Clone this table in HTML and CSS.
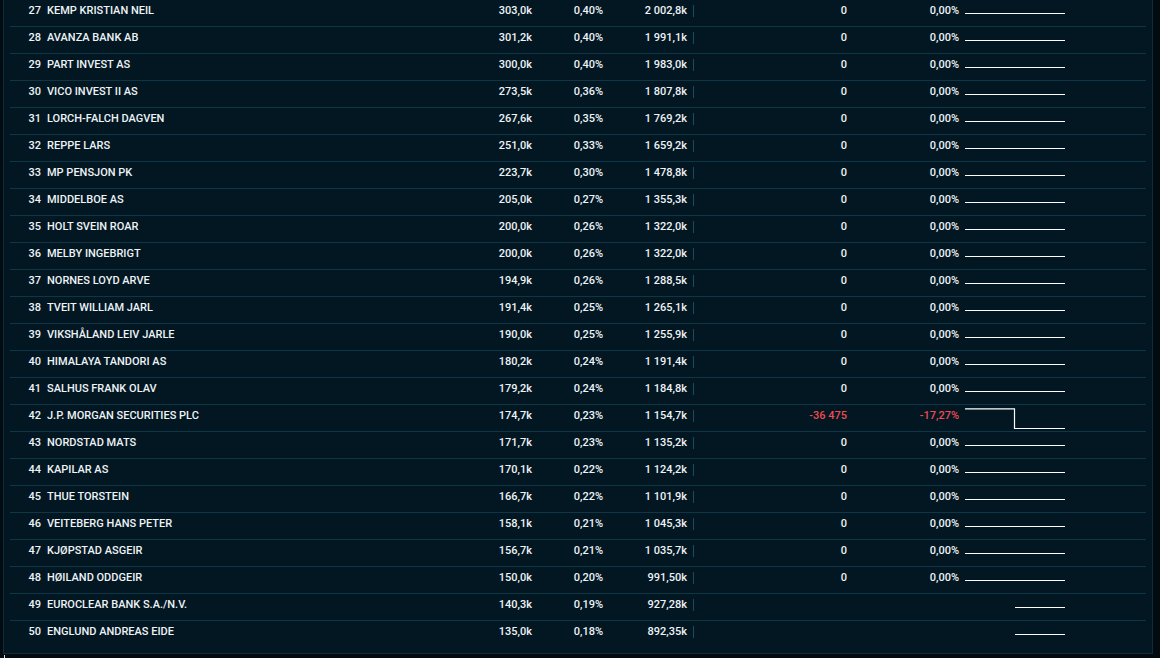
FILE: index.html
```html
<!DOCTYPE html>
<html lang="no">
<head>
<meta charset="utf-8">
<title>Aksjonærliste</title>
<link rel="stylesheet" href="styles.css">
</head>
<body>
<div class="panel">
  <div class="row"><span class="rank">27</span><span class="name">KEMP KRISTIAN NEIL</span><span class="c-val">303,0k</span><span class="c-pct">0,40%</span><span class="c-tot">2 002,8k</span><i class="div"></i><span class="c-chg">0</span><span class="c-chp">0,00%</span><svg class="spark" viewBox="0 0 100 22"><path d="M0 10.5H100"/></svg></div>
  <div class="row"><span class="rank">28</span><span class="name">AVANZA BANK AB</span><span class="c-val">301,2k</span><span class="c-pct">0,40%</span><span class="c-tot">1 991,1k</span><i class="div"></i><span class="c-chg">0</span><span class="c-chp">0,00%</span><svg class="spark" viewBox="0 0 100 22"><path d="M0 10.5H100"/></svg></div>
  <div class="row"><span class="rank">29</span><span class="name">PART INVEST AS</span><span class="c-val">300,0k</span><span class="c-pct">0,40%</span><span class="c-tot">1 983,0k</span><i class="div"></i><span class="c-chg">0</span><span class="c-chp">0,00%</span><svg class="spark" viewBox="0 0 100 22"><path d="M0 10.5H100"/></svg></div>
  <div class="row"><span class="rank">30</span><span class="name">VICO INVEST II AS</span><span class="c-val">273,5k</span><span class="c-pct">0,36%</span><span class="c-tot">1 807,8k</span><i class="div"></i><span class="c-chg">0</span><span class="c-chp">0,00%</span><svg class="spark" viewBox="0 0 100 22"><path d="M0 10.5H100"/></svg></div>
  <div class="row"><span class="rank">31</span><span class="name">LORCH-FALCH DAGVEN</span><span class="c-val">267,6k</span><span class="c-pct">0,35%</span><span class="c-tot">1 769,2k</span><i class="div"></i><span class="c-chg">0</span><span class="c-chp">0,00%</span><svg class="spark" viewBox="0 0 100 22"><path d="M0 10.5H100"/></svg></div>
  <div class="row"><span class="rank">32</span><span class="name">REPPE LARS</span><span class="c-val">251,0k</span><span class="c-pct">0,33%</span><span class="c-tot">1 659,2k</span><i class="div"></i><span class="c-chg">0</span><span class="c-chp">0,00%</span><svg class="spark" viewBox="0 0 100 22"><path d="M0 10.5H100"/></svg></div>
  <div class="row"><span class="rank">33</span><span class="name">MP PENSJON PK</span><span class="c-val">223,7k</span><span class="c-pct">0,30%</span><span class="c-tot">1 478,8k</span><i class="div"></i><span class="c-chg">0</span><span class="c-chp">0,00%</span><svg class="spark" viewBox="0 0 100 22"><path d="M0 10.5H100"/></svg></div>
  <div class="row"><span class="rank">34</span><span class="name">MIDDELBOE AS</span><span class="c-val">205,0k</span><span class="c-pct">0,27%</span><span class="c-tot">1 355,3k</span><i class="div"></i><span class="c-chg">0</span><span class="c-chp">0,00%</span><svg class="spark" viewBox="0 0 100 22"><path d="M0 10.5H100"/></svg></div>
  <div class="row"><span class="rank">35</span><span class="name">HOLT SVEIN ROAR</span><span class="c-val">200,0k</span><span class="c-pct">0,26%</span><span class="c-tot">1 322,0k</span><i class="div"></i><span class="c-chg">0</span><span class="c-chp">0,00%</span><svg class="spark" viewBox="0 0 100 22"><path d="M0 10.5H100"/></svg></div>
  <div class="row"><span class="rank">36</span><span class="name">MELBY INGEBRIGT</span><span class="c-val">200,0k</span><span class="c-pct">0,26%</span><span class="c-tot">1 322,0k</span><i class="div"></i><span class="c-chg">0</span><span class="c-chp">0,00%</span><svg class="spark" viewBox="0 0 100 22"><path d="M0 10.5H100"/></svg></div>
  <div class="row"><span class="rank">37</span><span class="name">NORNES LOYD ARVE</span><span class="c-val">194,9k</span><span class="c-pct">0,26%</span><span class="c-tot">1 288,5k</span><i class="div"></i><span class="c-chg">0</span><span class="c-chp">0,00%</span><svg class="spark" viewBox="0 0 100 22"><path d="M0 10.5H100"/></svg></div>
  <div class="row"><span class="rank">38</span><span class="name">TVEIT WILLIAM JARL</span><span class="c-val">191,4k</span><span class="c-pct">0,25%</span><span class="c-tot">1 265,1k</span><i class="div"></i><span class="c-chg">0</span><span class="c-chp">0,00%</span><svg class="spark" viewBox="0 0 100 22"><path d="M0 10.5H100"/></svg></div>
  <div class="row"><span class="rank">39</span><span class="name">VIKSHÅLAND LEIV JARLE</span><span class="c-val">190,0k</span><span class="c-pct">0,25%</span><span class="c-tot">1 255,9k</span><i class="div"></i><span class="c-chg">0</span><span class="c-chp">0,00%</span><svg class="spark" viewBox="0 0 100 22"><path d="M0 10.5H100"/></svg></div>
  <div class="row"><span class="rank">40</span><span class="name">HIMALAYA TANDORI AS</span><span class="c-val">180,2k</span><span class="c-pct">0,24%</span><span class="c-tot">1 191,4k</span><i class="div"></i><span class="c-chg">0</span><span class="c-chp">0,00%</span><svg class="spark" viewBox="0 0 100 22"><path d="M0 10.5H100"/></svg></div>
  <div class="row"><span class="rank">41</span><span class="name">SALHUS FRANK OLAV</span><span class="c-val">179,2k</span><span class="c-pct">0,24%</span><span class="c-tot">1 184,8k</span><i class="div"></i><span class="c-chg">0</span><span class="c-chp">0,00%</span><svg class="spark" viewBox="0 0 100 22"><path d="M0 10.5H100"/></svg></div>
  <div class="row"><span class="rank">42</span><span class="name">J.P. MORGAN SECURITIES PLC</span><span class="c-val">174,7k</span><span class="c-pct">0,23%</span><span class="c-tot">1 154,7k</span><i class="div"></i><span class="c-chg neg">-36 475</span><span class="c-chp neg">-17,27%</span><svg class="spark" viewBox="0 0 100 22"><path d="M0 0.8H49.5V20.5H100"/></svg></div>
  <div class="row"><span class="rank">43</span><span class="name">NORDSTAD MATS</span><span class="c-val">171,7k</span><span class="c-pct">0,23%</span><span class="c-tot">1 135,2k</span><i class="div"></i><span class="c-chg">0</span><span class="c-chp">0,00%</span><svg class="spark" viewBox="0 0 100 22"><path d="M0 10.5H100"/></svg></div>
  <div class="row"><span class="rank">44</span><span class="name">KAPILAR AS</span><span class="c-val">170,1k</span><span class="c-pct">0,22%</span><span class="c-tot">1 124,2k</span><i class="div"></i><span class="c-chg">0</span><span class="c-chp">0,00%</span><svg class="spark" viewBox="0 0 100 22"><path d="M0 10.5H100"/></svg></div>
  <div class="row"><span class="rank">45</span><span class="name">THUE TORSTEIN</span><span class="c-val">166,7k</span><span class="c-pct">0,22%</span><span class="c-tot">1 101,9k</span><i class="div"></i><span class="c-chg">0</span><span class="c-chp">0,00%</span><svg class="spark" viewBox="0 0 100 22"><path d="M0 10.5H100"/></svg></div>
  <div class="row"><span class="rank">46</span><span class="name">VEITEBERG HANS PETER</span><span class="c-val">158,1k</span><span class="c-pct">0,21%</span><span class="c-tot">1 045,3k</span><i class="div"></i><span class="c-chg">0</span><span class="c-chp">0,00%</span><svg class="spark" viewBox="0 0 100 22"><path d="M0 10.5H100"/></svg></div>
  <div class="row"><span class="rank">47</span><span class="name">KJØPSTAD ASGEIR</span><span class="c-val">156,7k</span><span class="c-pct">0,21%</span><span class="c-tot">1 035,7k</span><i class="div"></i><span class="c-chg">0</span><span class="c-chp">0,00%</span><svg class="spark" viewBox="0 0 100 22"><path d="M0 10.5H100"/></svg></div>
  <div class="row"><span class="rank">48</span><span class="name">HØILAND ODDGEIR</span><span class="c-val">150,0k</span><span class="c-pct">0,20%</span><span class="c-tot">991,50k</span><i class="div"></i><span class="c-chg">0</span><span class="c-chp">0,00%</span><svg class="spark" viewBox="0 0 100 22"><path d="M0 10.5H100"/></svg></div>
  <div class="row"><span class="rank">49</span><span class="name">EUROCLEAR BANK S.A./N.V.</span><span class="c-val">140,3k</span><span class="c-pct">0,19%</span><span class="c-tot">927,28k</span><i class="div"></i><span class="c-chg"></span><span class="c-chp"></span><svg class="spark" viewBox="0 0 100 22"><path d="M50 10.5H100"/></svg></div>
  <div class="row"><span class="rank">50</span><span class="name">ENGLUND ANDREAS EIDE</span><span class="c-val">135,0k</span><span class="c-pct">0,18%</span><span class="c-tot">892,35k</span><i class="div"></i><span class="c-chg"></span><span class="c-chp"></span><svg class="spark" viewBox="0 0 100 22"><path d="M50 10.5H100"/></svg></div>
</div>
<div class="below"><i class="tick"></i></div>
</body>
</html>
```

FILE: styles.css
```css
html, body {
  margin: 0;
  padding: 0;
}
body {
  background: #010b10;
  width: 1160px;
  height: 658px;
  overflow: hidden;
  font-family: Roboto, "Liberation Sans", sans-serif;
  font-size: 11px;
  font-weight: 500;
  color: #eef3f6;
}
.panel {
  margin-left: 3px;
  width: 1148px;
  background: #021722;
  border: 1px solid #0c2d3b;
  border-top: none;
  padding: 0 6px 6px;
  box-sizing: content-box;
  width: 1136px;
}
.row {
  display: flex;
  align-items: flex-start;
  height: 26px;
  border-bottom: 1px solid #0d3647;
}
.row:last-child {
  border-bottom: none;
}
.row span {
  padding-top: 4px;
  line-height: 13px;
  white-space: nowrap;
}
.rank {
  width: 31px;
  text-align: right;
  flex: none;
}
.name {
  flex: 1;
  padding-left: 6px;
}
.c-val { width: 80px; text-align: right; flex: none; }
.c-pct { width: 71px; text-align: right; flex: none; }
.c-tot { width: 84px; text-align: right; flex: none; }
.div {
  flex: none;
  width: 1px;
  height: 12px;
  margin: 5px 0 0 6px;
  background: #1a4a62;
}
.c-chg { width: 153px; text-align: right; flex: none; }
.c-chp { width: 112px; text-align: right; flex: none; }
.neg { color: #ef4a50; }
.spark {
  flex: none;
  width: 100px;
  height: 22px;
  margin: 3px 81px 0 6px;
  overflow: visible;
}
.spark path {
  fill: none;
  stroke: #ffffff;
  stroke-width: 1.2;
}
.below {
  padding-left: 4px;
  height: 4px;
}
.tick {
  display: block;
  width: 1px;
  height: 4px;
  margin-top: 1px;
  background: #d8dde0;
}
```
